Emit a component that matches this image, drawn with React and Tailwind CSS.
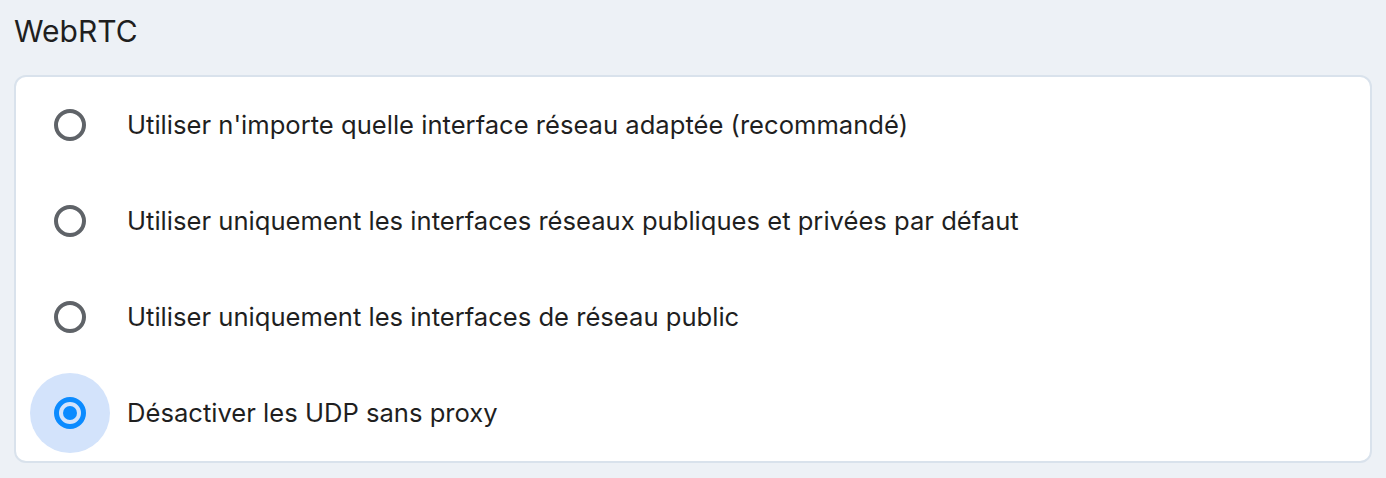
const options = [
  "Utiliser n'importe quelle interface réseau adaptée (recommandé)",
  "Utiliser uniquement les interfaces réseaux publiques et privées par défaut",
  "Utiliser uniquement les interfaces de réseau public",
  "Désactiver les UDP sans proxy",
];

function Radio({ checked }) {
  return (
    <span className="relative flex h-8 w-8 shrink-0 items-center justify-center">
      {checked && (
        <span className="absolute left-1/2 top-1/2 h-20 w-20 -translate-x-1/2 -translate-y-1/2 rounded-full bg-[#d3e3fb]" />
      )}
      <span
        className={`relative flex h-8 w-8 items-center justify-center rounded-full ${
          checked ? "border-[5px] border-[#0b8bff]" : "border-4 border-[#5f6368]"
        }`}
      >
        {checked && <span className="h-[14px] w-[14px] rounded-full bg-[#0b8bff]" />}
      </span>
    </span>
  );
}

export default function App() {
  const selected = 3;
  return (
    <div
      className="h-[478px] w-full bg-[#edf1f6] pl-[14px] pr-[14px] text-[#1f1f1f]"
      style={{ fontFamily: "Inter, Roboto, 'Noto Sans', sans-serif" }}
    >
      <div className="flex h-[75px] items-start pt-[11px]">
        <h2 className="text-[30px] leading-[40px] font-normal">WebRTC</h2>
      </div>
      <div className="rounded-[12px] border-2 border-[#d9e2ec] bg-white">
        {options.map((label, i) => (
          <label key={i} className="flex h-24 items-center pl-[38px]">
            <Radio checked={i === selected} />
            <span className="ml-[41px] text-[25.6px] leading-none text-[#1f1f1f]">{label}</span>
          </label>
        ))}
      </div>
    </div>
  );
}
